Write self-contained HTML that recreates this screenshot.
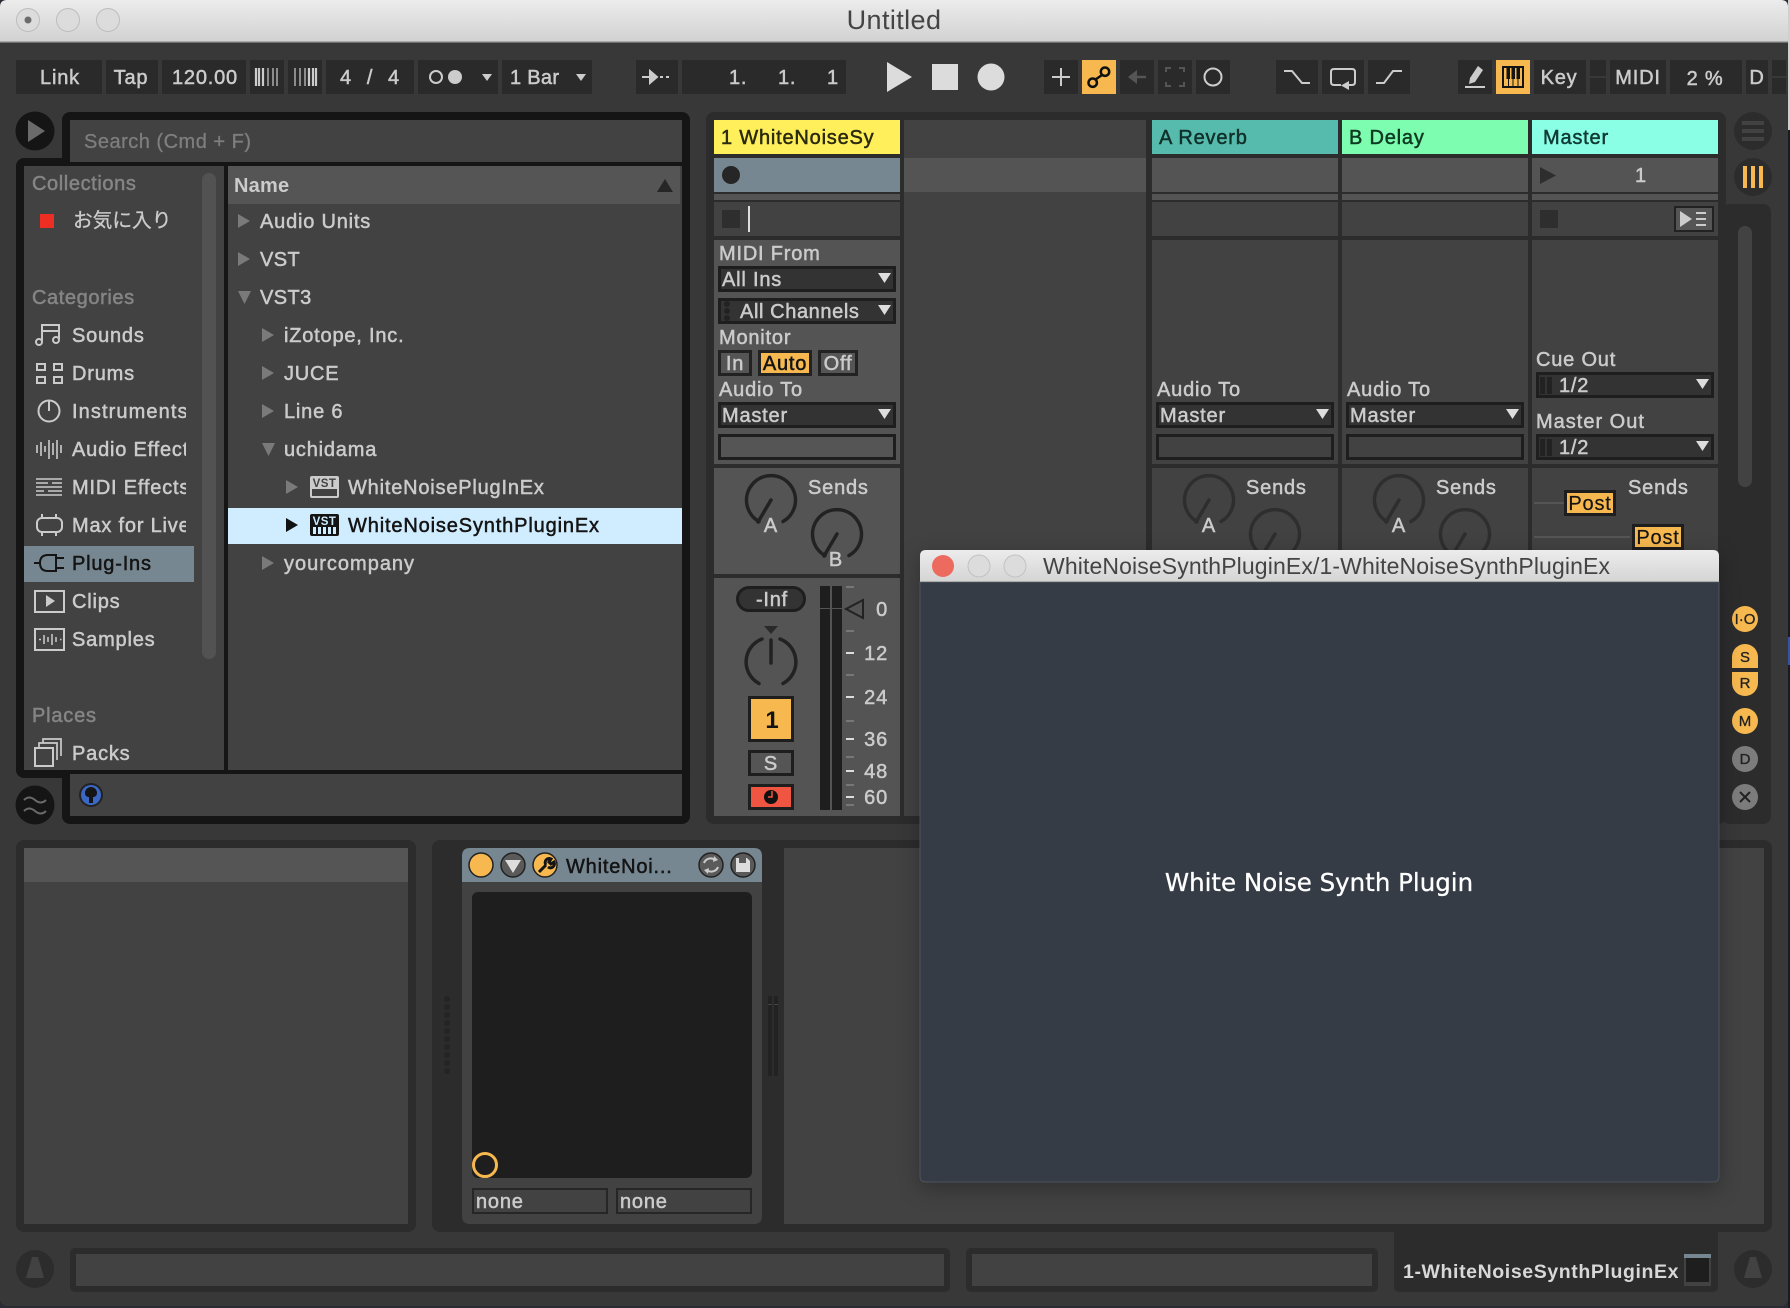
<!DOCTYPE html>
<html><head><meta charset="utf-8"><title>Untitled</title>
<style>
html,body{margin:0;padding:0;width:1790px;height:1308px;overflow:hidden;background:#2b2b33}
svg{display:block;position:absolute;left:0;top:0}
text{font-family:"Liberation Sans","Noto Sans CJK JP",sans-serif;font-size:20px;letter-spacing:.8px;fill:#cbcbcb;stroke:#cbcbcb;stroke-width:.5px}
.d{fill:#141414;stroke:#141414}
.g{fill:#858585;stroke:#858585}
.m{text-anchor:middle}
.e{text-anchor:end}
.k{fill:none;stroke:#222;stroke-width:3.5;stroke-linecap:round}
.k2{fill:none;stroke:#2e2e2e;stroke-width:3.5;stroke-linecap:round}
.i{fill:none;stroke:#cbcbcb;stroke-width:2}
.b{fill:#2a2a2a}
.dd{fill:#333;stroke:#1e1e1e;stroke-width:3}
.o{fill:#f6b84f}
.tx{font-family:"Liberation Sans",sans-serif;font-size:23px;letter-spacing:.12px;fill:#444;stroke:none}
.sm{font-size:15px;letter-spacing:0;fill:#222;stroke:#222;stroke-width:.3px}
</style></head><body>
<svg width="1790" height="1308" viewBox="0 0 1790 1308" xmlns="http://www.w3.org/2000/svg">
<defs>
<linearGradient id="tb" x1="0" y1="0" x2="0" y2="1"><stop offset="0" stop-color="#ececec"/><stop offset="1" stop-color="#d2d2d2"/></linearGradient>
<linearGradient id="ptb" x1="0" y1="0" x2="0" y2="1"><stop offset="0" stop-color="#ececec"/><stop offset="1" stop-color="#d4d4d4"/></linearGradient>
<clipPath id="cat"><rect x="70" y="400" width="116" height="140"/></clipPath>
<clipPath id="hd"><rect x="714" y="120" width="186" height="34"/></clipPath>
</defs>
<rect x="1788" y="0" width="2" height="1308" fill="#1a1a22"/>
<rect x="1788" y="0" width="2" height="130" fill="#cfcfd4"/>
<rect x="1788" y="637" width="2" height="28" fill="#2f55a8"/>
<rect x="0" y="0" width="1788" height="1306" rx="7" fill="#383838"/>
<path d="M0 41V7Q0 0 7 0H1781Q1788 0 1788 7V41Z" fill="url(#tb)"/>
<rect x="0" y="41" width="1788" height="1.5" fill="#a9a9a9"/>
<circle cx="28" cy="20" r="11.5" fill="#dcdcdc" stroke="#bdbdbd"/><circle cx="28" cy="20" r="3.5" fill="#6c6c6c"/>
<circle cx="68" cy="20" r="11.5" fill="#dcdcdc" stroke="#bdbdbd"/>
<circle cx="108" cy="20" r="11.5" fill="#dcdcdc" stroke="#bdbdbd"/>
<text class="tx m" x="894" y="29" style="font-size:27px;letter-spacing:.4px">Untitled</text>

<!-- transport boxes -->
<g class="b">
<rect x="16" y="60" width="86" height="34"/><rect x="106" y="60" width="52" height="34"/><rect x="162" y="60" width="84" height="34"/>
<rect x="250" y="60" width="34" height="34"/><rect x="288" y="60" width="34" height="34"/><rect x="326" y="60" width="88" height="34"/>
<rect x="418" y="60" width="80" height="34"/><rect x="502" y="60" width="90" height="34"/>
<rect x="636" y="60" width="42" height="34"/><rect x="682" y="60" width="164" height="34"/>
<rect x="1044" y="60" width="34" height="34"/><rect x="1120" y="60" width="34" height="34"/><rect x="1158" y="60" width="34" height="34"/><rect x="1196" y="60" width="34" height="34"/>
<rect x="1276" y="60" width="42" height="34"/><rect x="1322" y="60" width="42" height="34"/><rect x="1368" y="60" width="42" height="34"/>
<rect x="1458" y="60" width="34" height="34"/><rect x="1534" y="60" width="52" height="34"/>
<rect x="1590" y="60" width="16" height="16"/><rect x="1590" y="78" width="16" height="16"/>
<rect x="1610" y="60" width="56" height="34"/><rect x="1670" y="60" width="72" height="34"/><rect x="1746" y="60" width="22" height="34"/>
<rect x="1772" y="60" width="14" height="16"/><rect x="1772" y="78" width="14" height="16"/>
</g>
<rect x="1082" y="60" width="34" height="34" class="o"/><rect x="1496" y="60" width="34" height="34" class="o"/>
<text class="m" x="60" y="84">Link</text><text class="m" x="131" y="84">Tap</text><text class="m" x="205" y="84">120.00</text>
<path d="M259 68V86M263 68V86" stroke="#ccc" stroke-width="2.2"/><path d="M268 68V86M273 68V86M277 68V86" stroke="#ccc" stroke-width="1.2"/><path d="M256 68V86" stroke="#ccc" stroke-width="2.2"/>
<path d="M295 68V86M300 68V86M305 68V86" stroke="#ccc" stroke-width="1.2"/><path d="M309 68V86M313 68V86M316 68V86" stroke="#ccc" stroke-width="2.2"/>
<text class="m" x="346" y="84">4</text><text class="m" x="370" y="84">/</text><text class="m" x="394" y="84">4</text>
<circle cx="436" cy="77" r="6" fill="none" stroke="#ccc" stroke-width="2"/><circle cx="455" cy="77" r="7" fill="#ccc"/>
<path d="M482 74h10l-5 7z" fill="#ccc"/>
<text x="510" y="84" style="letter-spacing:.3px">1 Bar</text><path d="M576 74h10l-5 7z" fill="#ccc"/>
<path d="M642 77h8M650 71l7 6-7 6z" stroke="#ccc" stroke-width="2" fill="#ccc"/><path d="M660 77h3M666 77h3" stroke="#ccc" stroke-width="2"/>
<text x="729" y="84">1.</text><text x="778" y="84">1.</text><text x="827" y="84">1</text>
<path d="M887 62L912 77L887 92Z" fill="#dcdcdc"/>
<rect x="932" y="64" width="26" height="26" fill="#dcdcdc"/>
<circle cx="991" cy="77" r="13.5" fill="#dcdcdc"/>
<path d="M1061 68V86M1052 77H1070" stroke="#ccc" stroke-width="2" fill="none"/>
<path d="M1095.500 79.500L1102 75" stroke="#111" stroke-width="2.5"/><circle cx="1092.700" cy="82.700" r="4.200" fill="none" stroke="#111" stroke-width="2.5"/><circle cx="1105" cy="71.700" r="4.200" fill="none" stroke="#111" stroke-width="2.5"/>
<path d="M1136 77h10" stroke="#555" stroke-width="2.5"/><path d="M1137 70v14l-9-7z" fill="#555"/>
<path d="M1166 72v-4h5M1179 68h5v4M1184 82v4h-5M1171 86h-5v-4" fill="none" stroke="#555" stroke-width="2"/>
<circle cx="1213" cy="77" r="8.500" fill="none" stroke="#ccc" stroke-width="2"/>
<path d="M1284 71h8l10 12h8" fill="none" stroke="#ccc" stroke-width="2"/>
<path d="M1341 85h-7q-3 0-3-3V72q0-3 3-3h18q3 0 3 3v10q0 3-3 3h-4" fill="none" stroke="#ccc" stroke-width="2"/><path d="M1341 85.500L1349 81V90Z" fill="#ccc"/>
<path d="M1376 83h8l9-12h9" fill="none" stroke="#ccc" stroke-width="2"/>
<path d="M1465 87h20" stroke="#ccc" stroke-width="2"/><path d="M1478 66l5 4-8 12-6 2 1-6z" fill="#ccc"/>
<rect x="1503" y="67" width="20" height="20" fill="none" stroke="#141414" stroke-width="2"/><rect x="1506.500" y="67" width="3.500" height="12" fill="#141414"/><rect x="1511.500" y="67" width="3.500" height="12" fill="#141414"/><rect x="1516.500" y="67" width="3.500" height="12" fill="#141414"/><path d="M1508.500 78v9M1513 78v9M1518 78v9" stroke="#141414"/>
<text class="m" x="1559" y="84">Key</text><text class="m" x="1638" y="84">MIDI</text><text class="m" x="1705" y="85">2 %</text><text class="m" x="1757" y="84">D</text>

<!-- browser -->
<ellipse cx="35" cy="131" rx="19.500" ry="19.500" fill="#151515"/><path d="M28 120v22l17-11z" fill="#6a6a6a"/>
<rect x="62" y="112" width="628" height="60" rx="8" fill="#151515"/>
<rect x="16" y="158" width="674" height="620" rx="8" fill="#151515"/>
<rect x="62" y="766" width="628" height="58" rx="8" fill="#151515"/>
<rect x="70" y="120" width="612" height="42" fill="#424242"/>
<text class="g" x="84" y="148" style="stroke-width:.3px;fill:#7e7e7e;stroke:#7e7e7e;letter-spacing:.5px">Search (Cmd + F)</text>
<rect x="24" y="166" width="200" height="604" fill="#424242"/>
<rect x="228" y="166" width="454" height="604" fill="#424242"/>
<rect x="228" y="166" width="452" height="38" fill="#555"/>
<text x="234" y="192" style="font-weight:bold;letter-spacing:.2px;stroke-width:0">Name</text>
<path d="M665 179l8 13h-16z" fill="#262626"/>
<rect x="202" y="173" width="14" height="486" rx="7" fill="#525252"/>
<text class="g" x="32" y="190" style="letter-spacing:.6px">Collections</text>
<rect x="40" y="214" width="14" height="14" fill="#ee2e22"/>
<text x="73" y="227" style="letter-spacing:0;font-size:19.700px;stroke-width:.3px">お気に入り</text>
<text class="g" x="32" y="304" style="letter-spacing:.6px">Categories</text>
<text x="72" y="342">Sounds</text><text x="72" y="380">Drums</text>
<g clip-path="url(#cat)"><text x="72" y="418" style="letter-spacing:1.1px">Instruments</text><text x="72" y="456">Audio Effects</text><text x="72" y="494">MIDI Effects</text><text x="72" y="532">Max for Live</text></g>
<rect x="24" y="546" width="170" height="36" fill="#778791"/>
<text class="d" x="72" y="570">Plug-Ins</text>
<text x="72" y="608">Clips</text><text x="72" y="646">Samples</text>
<text class="g" x="32" y="722">Places</text><text x="72" y="760">Packs</text>
<!-- category icons -->
<g class="i">
<path d="M42 341V325H59V339M42 331H59"/><circle cx="39" cy="342" r="3"/><circle cx="56" cy="340" r="3"/>
<rect x="37" y="364" width="8" height="6"/><rect x="54" y="364" width="8" height="6"/><rect x="37" y="377" width="8" height="6"/><rect x="54" y="377" width="8" height="6"/>
<circle cx="49" cy="411" r="10.500"/><path d="M49 401v10"/>
<path d="M37 445v8M41 442v14M45 446v6M49 440v19M53 443v12M57 440v19M61 445v8" stroke-width="1.600"/>
<path d="M36 479h26M36 483h12M52 483h10M36 487h26M36 491h8M48 491h14M36 495h26" stroke-width="1.600"/>
<rect x="37" y="518" width="25" height="14" rx="5"/><path d="M42 514v4M56 514v4M42 532v4M56 532v4"/>
<rect x="35" y="591" width="29" height="21"/><path d="M46 595l9 6-9 6z" fill="#cbcbcb" stroke="none"/>
<rect x="35" y="629" width="29" height="21"/><path d="M39 639.500h2M44 635v9M48 637v5M52 634v11M56 637v5M60 639.500h1.500" stroke-width="1.500"/>
<rect x="35" y="748" width="18" height="18"/><path d="M39 747v-4h18v17M43 743v-4h18v17" stroke-width="1.700"/>
</g>
<g fill="none" stroke="#141414" stroke-width="2"><path d="M34 563h6M56 558h8M56 568h8"/><path d="M48 555h8v16h-8q-8 0-8-8t8-8z"/></g>
<!-- tree -->
<g fill="#7a7a7a">
<path d="M238 214l12 7-12 7zM238 252l12 7-12 7z"/><path d="M238 291h13l-6.500 13z"/>
<path d="M262 328l12 7-12 7zM262 366l12 7-12 7zM262 404l12 7-12 7z"/><path d="M262 443h13l-6.500 13z"/>
<path d="M286 480l12 7-12 7z"/><path d="M262 556l12 7-12 7z"/>
</g>
<text x="260" y="228">Audio Units</text><text x="260" y="266" style="letter-spacing:.4px">VST</text><text x="260" y="304" style="letter-spacing:.4px">VST3</text>
<text x="284" y="342">iZotope, Inc.</text><text x="284" y="380">JUCE</text><text x="284" y="418">Line 6</text><text x="284" y="456">uchidama</text>
<rect x="310" y="476" width="29" height="22" rx="2" fill="#cbcbcb"/><rect x="312" y="489" width="25" height="7" fill="#424242"/>
<text x="324.500" y="487" class="m" style="font-size:11.500px;font-weight:bold;letter-spacing:.5px;fill:#424242;stroke:none">VST</text>
<text x="348" y="494">WhiteNoisePlugInEx</text>
<rect x="228" y="508" width="454" height="36" fill="#d0ecff"/>
<path d="M286 518l12 7-12 7z" fill="#111"/>
<rect x="310" y="514" width="29" height="22" rx="2" fill="#141414"/>
<text x="324.500" y="525" class="m" style="font-size:11.500px;font-weight:bold;letter-spacing:.5px;fill:#d0ecff;stroke:none">VST</text>
<path d="M313 527h3v7h-3zM318 527h3v7h-3zM323 527h3v7h-3zM328 527h3v7h-3zM333 527h3v7h-3z" fill="#d0ecff"/>
<text class="d" x="348" y="532" style="letter-spacing:.85px">WhiteNoiseSynthPluginEx</text>
<text x="284" y="570" style="letter-spacing:1px">yourcompany</text>
<rect x="70" y="774" width="612" height="42" fill="#424242"/>
<circle cx="91" cy="795" r="12" fill="#222"/><circle cx="91" cy="795" r="10" fill="#3a68c4"/><path d="M91 787a6 6 0 0 1 6 6c0 3-2 4-4 4v6h-4v-6c-2 0-4-1-4-4a6 6 0 0 1 6-6z" fill="#151515"/>
<circle cx="35" cy="805" r="19.500" fill="#151515"/>
<path d="M24 800q5-5 11 0t11 0M24 811q5-5 11 0t11 0" fill="none" stroke="#6a6a6a" stroke-width="2"/>

<!-- session frame -->
<rect x="706" y="112" width="1020" height="712" rx="8" fill="#2c2c2c"/>
<rect x="1722" y="204" width="49" height="620" rx="8" fill="#2c2c2c"/>
<rect x="904" y="120" width="242" height="696" fill="#424242"/>
<rect x="904" y="158" width="242" height="34" fill="#545454"/>
<g fill="#424242">
<rect x="1152" y="202" width="186" height="34"/><rect x="1342" y="202" width="186" height="34"/><rect x="1532" y="202" width="186" height="34"/>
<rect x="1152" y="240" width="186" height="224"/><rect x="1342" y="240" width="186" height="224"/><rect x="1532" y="240" width="186" height="224"/>
<rect x="1152" y="468" width="186" height="106"/><rect x="1342" y="468" width="186" height="106"/><rect x="1532" y="468" width="186" height="106"/>
<rect x="714" y="202" width="186" height="34"/>
</g>
<g fill="#545454">
<rect x="1152" y="158" width="186" height="34"/><rect x="1342" y="158" width="186" height="34"/><rect x="1532" y="158" width="186" height="34"/>
<rect x="1152" y="194" width="186" height="6"/><rect x="1342" y="194" width="186" height="6"/><rect x="1532" y="194" width="186" height="6"/>
<rect x="714" y="194" width="186" height="6"/>
<rect x="714" y="240" width="186" height="224"/><rect x="714" y="468" width="186" height="106"/><rect x="714" y="578" width="186" height="238"/>
</g>
<rect x="714" y="158" width="186" height="34" fill="#778791"/>
<rect x="714" y="120" width="186" height="34" fill="#ffef5a"/>
<rect x="1152" y="120" width="186" height="34" fill="#56baac"/>
<rect x="1342" y="120" width="186" height="34" fill="#7dfdaf"/>
<rect x="1532" y="120" width="186" height="34" fill="#8bffe5"/>
<g clip-path="url(#hd)"><text x="721" y="144" style="fill:#2a2a10;stroke:#2a2a10">1 WhiteNoiseSy</text></g>
<text x="1159" y="144" style="fill:#10302a;stroke:#10302a">A Reverb</text>
<text x="1349" y="144" style="fill:#0e3a22;stroke:#0e3a22">B Delay</text>
<text x="1543" y="144" style="fill:#103a34;stroke:#103a34">Master</text>
<circle cx="731" cy="175" r="9" fill="#262626"/>
<rect x="722" y="210" width="18" height="18" fill="#2e2e2e"/>
<rect x="748" y="206" width="2" height="26" fill="#ddd"/>
<path d="M1540 167l16 8.500-16 8.500z" fill="#2e2e2e"/>
<text class="m" x="1641" y="182">1</text>
<rect x="1540" y="210" width="18" height="18" fill="#2e2e2e"/>
<rect x="1675" y="207" width="38" height="24" fill="#555" stroke="#222" stroke-width="2"/>
<path d="M1680 211l12 8-12 8z" fill="#ccc"/><path d="M1696 213h10M1696 219h10M1696 225h10" stroke="#ccc" stroke-width="2"/>

<!-- track 1 IO -->
<text x="719" y="260">MIDI From</text>
<rect x="719.500" y="267.500" width="175" height="23" class="dd"/><text x="722" y="286">All Ins</text><path d="M878 273h13l-6.500 10z" fill="#ddd"/>
<rect x="719.500" y="299.500" width="175" height="23" class="dd"/><circle cx="727" cy="304" r="3" fill="#222"/><circle cx="727" cy="311" r="3" fill="#222"/><circle cx="727" cy="318" r="3" fill="#222"/><text x="740" y="318" style="letter-spacing:.6px">All Channels</text><path d="M878 305h13l-6.500 10z" fill="#ddd"/>
<text x="719" y="344">Monitor</text>
<rect x="719.500" y="351.500" width="31" height="23" fill="#555" stroke="#222" stroke-width="3"/><text class="m" x="735" y="370">In</text>
<rect x="759.500" y="351.500" width="51" height="23" class="o" stroke="#222" stroke-width="3"/><text class="d m" x="785" y="370">Auto</text>
<rect x="819.500" y="351.500" width="37" height="23" fill="#555" stroke="#222" stroke-width="3"/><text class="m" x="838" y="370">Off</text>
<text x="719" y="396">Audio To</text>
<rect x="719.500" y="403.500" width="175" height="23" class="dd"/><text x="722" y="422">Master</text><path d="M878 409h13l-6.500 10z" fill="#ddd"/>
<rect x="719.500" y="435.500" width="175" height="23" fill="#555" stroke="#1e1e1e" stroke-width="3"/>
<!-- track 1 sends -->
<path class="k" d="M759 521.500A24.500 24.500 0 1 1 783 521.500M771 500L758 522"/>
<text class="m" x="771" y="532">A</text>
<text x="808" y="494">Sends</text>
<path class="k" d="M825 555.500A24.500 24.500 0 1 1 849 555.500M837 534L824 556"/>
<text class="m" x="836" y="566">B</text>
<!-- mixer -->
<rect x="737.500" y="587.500" width="67" height="23" rx="11.500" class="dd"/><text class="m" x="772" y="606">-Inf</text>
<path d="M764 626h14l-7 8z" fill="#2a2a2a"/>
<path class="k" d="M759 683.500A24.500 24.500 0 0 1 762 639M783 683.500A24.500 24.500 0 0 0 780 639M771 640V663"/>
<rect x="749.500" y="697.500" width="43" height="43" class="o" stroke="#1e1e1e" stroke-width="3"/>
<text class="d m" x="772" y="728" style="font-size:24px;font-weight:bold;letter-spacing:0;stroke-width:0">1</text>
<rect x="749.500" y="751.500" width="43" height="23" fill="#555" stroke="#1e1e1e" stroke-width="3"/><text class="m" x="771" y="770">S</text>
<rect x="749.500" y="785.500" width="43" height="23" fill="#f05541" stroke="#1e1e1e" stroke-width="3"/><circle cx="771" cy="797" r="7" fill="#111"/><path d="M772 791v6h-4" stroke="#f05541" stroke-width="1.500" fill="none"/>
<rect x="820" y="586" width="10" height="224" fill="#1e1e1e"/><rect x="832" y="586" width="10" height="224" fill="#1e1e1e"/>
<path d="M820 608.500h10M832 608.500h10" stroke="#555"/>
<path d="M846 609L863 600V618Z" fill="none" stroke="#222" stroke-width="2"/>
<g stroke="#777" stroke-width="2"><path d="M846 587h8M846 631h8M846 675h8M846 721h8M846 757h8M846 785h8M846 805h8"/></g>
<g stroke="#ddd" stroke-width="2"><path d="M846 653h8M846 697h8M846 739h8M846 771h8M846 797h8"/></g>
<g class="num"><text class="e" x="888" y="616">0</text><text class="e" x="888" y="660">12</text><text class="e" x="888" y="704">24</text><text class="e" x="888" y="746">36</text><text class="e" x="888" y="778">48</text><text class="e" x="888" y="804">60</text></g>

<!-- returns -->
<text x="1157" y="396">Audio To</text>
<rect x="1157.500" y="403.500" width="175" height="23" class="dd"/><text x="1160" y="422">Master</text><path d="M1316 409h13l-6.500 10z" fill="#ddd"/>
<rect x="1157.500" y="435.500" width="175" height="23" fill="#424242" stroke="#1e1e1e" stroke-width="3"/>
<text x="1347" y="396">Audio To</text>
<rect x="1347.500" y="403.500" width="175" height="23" class="dd"/><text x="1350" y="422">Master</text><path d="M1506 409h13l-6.500 10z" fill="#ddd"/>
<rect x="1347.500" y="435.500" width="175" height="23" fill="#424242" stroke="#1e1e1e" stroke-width="3"/>
<path class="k2" d="M1197 521.500A24.500 24.500 0 1 1 1221 521.500M1209 500L1196 522"/><text class="m" x="1209" y="532">A</text><text x="1246" y="494">Sends</text>
<path class="k2" d="M1263 555.500A24.500 24.500 0 1 1 1287 555.500M1275 534L1262 556"/>
<path class="k2" d="M1387 521.500A24.500 24.500 0 1 1 1411 521.500M1399 500L1386 522"/><text class="m" x="1399" y="532">A</text><text x="1436" y="494">Sends</text>
<path class="k2" d="M1453 555.500A24.500 24.500 0 1 1 1477 555.500M1465 534L1452 556"/>
<!-- master -->
<text x="1536" y="366">Cue Out</text>
<rect x="1537.500" y="373.500" width="175" height="23" class="dd"/><rect x="1540" y="377" width="5" height="17" fill="#222"/><rect x="1547" y="377" width="5" height="17" fill="#222"/><text x="1559" y="392">1/2</text><path d="M1696 379h13l-6.500 10z" fill="#ddd"/>
<text x="1536" y="428" style="letter-spacing:1px">Master Out</text>
<rect x="1537.500" y="435.500" width="175" height="23" class="dd"/><rect x="1540" y="439" width="5" height="17" fill="#222"/><rect x="1547" y="439" width="5" height="17" fill="#222"/><text x="1559" y="454">1/2</text><path d="M1696 441h13l-6.500 10z" fill="#ddd"/>
<text x="1628" y="494">Sends</text>
<path d="M1534 503h30M1534 537h96" stroke="#555" stroke-width="2"/>
<rect x="1565.500" y="491.500" width="49" height="23" class="o" stroke="#1e1e1e" stroke-width="3"/><text class="d m" x="1590" y="510" style="stroke-width:.2px">Post</text>
<rect x="1633.500" y="525.500" width="49" height="23" class="o" stroke="#1e1e1e" stroke-width="3"/><text class="d m" x="1658" y="544" style="stroke-width:.2px">Post</text>
<!-- right rail -->
<circle cx="1753" cy="131" r="19" fill="#2c2c2c"/><path d="M1742 121h22v4h-22zM1742 129h22v4h-22zM1742 137h22v4h-22z" fill="#424242"/>
<circle cx="1753" cy="177" r="19" fill="#2c2c2c"/><path d="M1743 166h4v22h-4zM1751 166h4v22h-4zM1759 166h4v22h-4z" fill="#f6b84f"/>
<rect x="1738" y="226" width="14" height="261" rx="7" fill="#424242"/>
<circle cx="1745" cy="619" r="13" class="o"/>
<path d="M1732 657a13 13 0 0 1 26 0v11h-26z" class="o"/>
<path d="M1732 672h26v11a13 13 0 0 1-26 0z" class="o"/>
<circle cx="1745" cy="721" r="13" class="o"/>
<circle cx="1745" cy="759" r="13" fill="#7c7c7c"/>
<circle cx="1745" cy="797" r="13" fill="#7c7c7c"/>
<g><text class="sm m" x="1745" y="624">I·O</text><text class="sm m" x="1745" y="662">S</text><text class="sm m" x="1745" y="688">R</text><text class="sm m" x="1745" y="726">M</text><text class="sm m" x="1745" y="764">D</text></g>
<path d="M1740 792l10 10M1750 792l-10 10" stroke="#222" stroke-width="2"/>

<!-- bottom panels -->
<rect x="16" y="840" width="400" height="392" rx="8" fill="#2c2c2c"/>
<rect x="24" y="848" width="384" height="376" fill="#424242"/><rect x="24" y="848" width="384" height="34" fill="#555"/>
<rect x="432" y="840" width="1340" height="392" rx="8" fill="#2c2c2c"/>
<rect x="784" y="848" width="980" height="376" fill="#424242"/>
<path d="M462 882V856q0-8 8-8h284q8 0 8 8v26z" fill="#778791"/>
<path d="M462 882h300v334q0 8-8 8H470q-8 0-8-8z" fill="#424242"/>
<circle cx="481" cy="865" r="12" class="o" stroke="#222" stroke-width="1.500"/>
<circle cx="513" cy="865" r="12" fill="#5a5a5a" stroke="#222" stroke-width="1.500"/><path d="M505 860h16l-8 13z" fill="#ddd"/>
<circle cx="545" cy="865" r="12" class="o" stroke="#222" stroke-width="1.500"/><path d="M539 872l7-7m0 0a4 4 0 0 1 5-6l-2 3 2 2 3-2a4 4 0 0 1-6 5" fill="none" stroke="#141414" stroke-width="3"/>
<text class="d" x="566" y="873">WhiteNoi...</text>
<circle cx="711" cy="865" r="12" fill="#5a5a5a" stroke="#222" stroke-width="1.500"/><path d="M704 863a7 7 0 0 1 11-3M718 867a7 7 0 0 1-11 3" fill="none" stroke="#ccc" stroke-width="2"/><path d="M714 856l4 4-5 2zM708 874l-4-4 5-2z" fill="#ccc"/>
<circle cx="743" cy="865" r="12" fill="#5a5a5a" stroke="#222" stroke-width="1.500"/><path d="M736 858h11l3 3v11h-14z" fill="#ddd"/><rect x="739" y="858" width="7" height="5" fill="#5a5a5a"/>
<rect x="472" y="892" width="280" height="286" rx="6" fill="#1e1e1e"/>
<circle cx="485" cy="1165" r="11.500" fill="none" stroke="#f6b84f" stroke-width="3"/>
<rect x="473" y="1189" width="134" height="24" fill="#424242" stroke="#262626" stroke-width="2"/><text x="476" y="1208">none</text>
<rect x="617" y="1189" width="134" height="24" fill="#424242" stroke="#262626" stroke-width="2"/><text x="620" y="1208">none</text>
<g fill="#242424"><circle cx="447" cy="999" r="3"/><circle cx="447" cy="1007" r="3"/><circle cx="447" cy="1015" r="3"/><circle cx="447" cy="1023" r="3"/><circle cx="447" cy="1031" r="3"/><circle cx="447" cy="1039" r="3"/><circle cx="447" cy="1047" r="3"/><circle cx="447" cy="1055" r="3"/><circle cx="447" cy="1063" r="3"/><circle cx="447" cy="1071" r="3"/></g>
<rect x="768" y="996" width="4" height="80" fill="#222"/><rect x="774" y="996" width="4" height="80" fill="#222"/>
<path d="M768 1004.500h4M774 1004.500h4" stroke="#444"/>

<!-- status bar -->
<ellipse cx="35" cy="1269" rx="19" ry="19" fill="#2c2c2c"/><path d="M32 1257h6l6 21h-18z" fill="#424242"/>
<rect x="70" y="1248" width="880" height="44" rx="5" fill="#2c2c2c"/><rect x="76" y="1254" width="868" height="32" fill="#424242"/>
<rect x="966" y="1248" width="412" height="44" rx="5" fill="#2c2c2c"/><rect x="972" y="1254" width="400" height="32" fill="#424242"/>
<path d="M1394 1232h324v54q0 6-6 6h-312q-6 0-6-6z" fill="#2c2c2c"/>
<text x="1403" y="1278" style="font-weight:bold;font-size:19.500px;letter-spacing:.6px;fill:#d8d8d8;stroke:none">1-WhiteNoiseSynthPluginEx</text>
<rect x="1684" y="1254" width="27" height="32" fill="#424242"/><rect x="1684" y="1254" width="27" height="4" fill="#778791"/><rect x="1686" y="1258" width="23" height="24" fill="#1e1e1e"/>
<ellipse cx="1753" cy="1269" rx="19" ry="19" fill="#2c2c2c"/><path d="M1750 1257h6l6 21h-18z" fill="#424242"/>

<!-- plugin window -->
<g style="filter:drop-shadow(0 6px 10px rgba(0,0,0,.28))">
<path d="M920 1176V582h799v594q0 6-6 6H926q-6 0-6-6z" fill="#353c45" stroke="#4b545e" stroke-width="1"/>
<path d="M920 582V556q0-6 6-6h787q6 0 6 6v26z" fill="url(#ptb)"/>
<rect x="920" y="581" width="799" height="1" fill="#aaa"/>
</g>
<circle cx="943" cy="566" r="11" fill="#ec6a5e"/>
<circle cx="979" cy="566" r="11" fill="#dcdcdc" stroke="#c2c2c2"/>
<circle cx="1015" cy="566" r="11" fill="#dcdcdc" stroke="#c2c2c2"/>
<text class="tx" x="1043" y="574">WhiteNoiseSynthPluginEx/1-WhiteNoiseSynthPluginEx</text>
<text class="m" x="1319" y="891" style="font-family:'DejaVu Sans',sans-serif;font-size:24.500px;letter-spacing:0;fill:#fff;stroke:#fff;stroke-width:.3px">White Noise Synth Plugin</text>
</svg>
</body></html>
